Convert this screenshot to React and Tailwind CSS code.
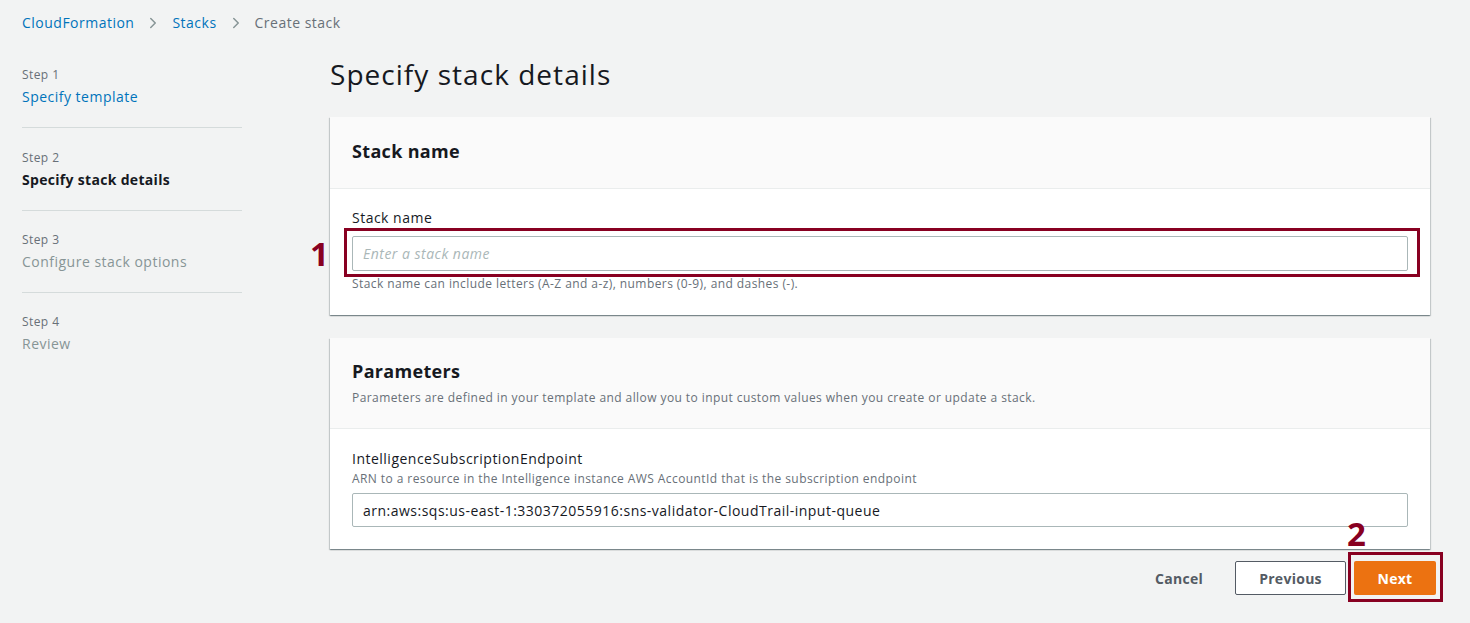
import { ChevronRight } from 'lucide-react';

const font = { fontFamily: '"Open Sans", "Noto Sans", Arial, sans-serif' };

const steps = [
  { step: 'Step 1', label: 'Specify template', state: 'done' },
  { step: 'Step 2', label: 'Specify stack details', state: 'current' },
  { step: 'Step 3', label: 'Configure stack options', state: 'todo' },
  { step: 'Step 4', label: 'Review', state: 'todo' },
];

function Breadcrumbs() {
  return (
    <div className="flex items-center h-[44px] pt-[1px] pl-[22px] text-[14px] leading-5 tracking-[0.035em]">
      <span className="text-[#0073bb]">CloudFormation</span>
      <ChevronRight className="mx-[10px] w-[18px] h-[18px] text-[#879596]" strokeWidth={2} />
      <span className="text-[#0073bb]">Stacks</span>
      <ChevronRight className="mx-[10px] w-[18px] h-[18px] text-[#879596]" strokeWidth={2} />
      <span className="text-[#687078]">Create stack</span>
    </div>
  );
}

function Sidebar() {
  return (
    <div className="w-[220px] shrink-0">
      {steps.map((s, i) => (
        <div
          key={s.step}
          className={`${i === 0 ? 'pt-[23px]' : i === 1 ? 'pt-[22px]' : 'pt-[21px]'} pb-[20px] ${
            i < steps.length - 1 ? 'border-b border-[#d5dbdb]' : ''
          }`}
        >
          <div className="text-[12px] leading-4 text-[#687078] tracking-[0.035em]">{s.step}</div>
          <div
            className={`mt-[4px] text-[14px] leading-5 ${
              s.state === 'done'
                ? 'text-[#0073bb] tracking-[0.035em]'
                : s.state === 'current'
                ? 'font-bold text-[#16191f] tracking-[0.022em]'
                : 'text-[#879596] tracking-[0.035em]'
            }`}
          >
            {s.label}
          </div>
        </div>
      ))}
    </div>
  );
}

function Marker({ n, className }) {
  return (
    <span className={`absolute text-[33px] leading-none font-bold text-[#880021] ${className}`}>{n}</span>
  );
}

function Panel({ children }) {
  return (
    <div className="bg-white shadow-[0_1px_1px_0_rgba(0,28,36,0.3),1px_1px_1px_0_rgba(0,28,36,0.15),-1px_1px_1px_0_rgba(0,28,36,0.15)]">
      {children}
    </div>
  );
}

export default function App() {
  return (
    <div className="min-h-[623px] bg-[#f2f3f3] text-[#16191f]" style={font}>
      <Breadcrumbs />
      <div className="flex pl-[22px]">
        <Sidebar />
        <div className="ml-[88px] w-[1100px]">
          <h1 className="mt-[12px] text-[28px] leading-9 font-normal text-[#16191f] tracking-[0.037em]">
            Specify stack details
          </h1>

          <div className="mt-[25px]">
            <Panel>
              <div className="bg-[#fafafa] border-b border-[#eaeded] px-[22px] pt-[22px] pb-[25px]">
                <h2 className="text-[18px] leading-6 font-bold tracking-[0.018em]">Stack name</h2>
              </div>
              <div className="px-[22px] pt-[19px] pb-[23px]">
                <div className="text-[14px] leading-5 tracking-[0.035em]">Stack name</div>
                <div className="relative mt-[8px]">
                  <div className="h-[35px] border border-[#aab7b8] rounded-[2px] flex items-center px-[10px] text-[14px] italic text-[#aab7b8] tracking-[0.035em]">
                    Enter a stack name
                  </div>
                  <div className="absolute left-[-8px] right-[-12px] top-[-8px] bottom-[-6px] border-[3px] border-[#880021]" />
                  <Marker n="1" className="left-[-42px] top-[1px]" />
                </div>
                <div className="mt-[5px] text-[12px] leading-4 text-[#687078] tracking-[0.035em]">
                  Stack name can include letters (A-Z and a-z), numbers (0-9), and dashes (-).
                </div>
              </div>
            </Panel>
          </div>

          <div className="mt-[23px]">
            <Panel>
              <div className="bg-[#fafafa] border-b border-[#eaeded] px-[22px] pt-[21px] pb-[22px]">
                <h2 className="text-[18px] leading-6 font-bold tracking-[0.018em]">Parameters</h2>
                <div className="mt-[7px] text-[12px] leading-4 text-[#687078] tracking-[0.035em]">
                  Parameters are defined in your template and allow you to input custom values when you create or update a stack.
                </div>
              </div>
              <div className="px-[22px] pt-[20px] pb-[22px]">
                <div className="text-[14px] leading-5 tracking-[0.035em]">IntelligenceSubscriptionEndpoint</div>
                <div className="mt-[2px] text-[12px] leading-4 text-[#687078] tracking-[0.035em]">
                  ARN to a resource in the Intelligence instance AWS AccountId that is the subscription endpoint
                </div>
                <div className="mt-[6px] h-[34px] border border-[#aab7b8] rounded-[2px] flex items-center px-[10px] text-[14px] text-[#16191f] tracking-[0.035em]">
                  arn:aws:sqs:us-east-1:330372055916:sns-validator-CloudTrail-input-queue
                </div>
              </div>
            </Panel>
          </div>

          <div className="mt-[12px] -mr-[6px] flex items-center justify-end">
            <button className="text-[14px] font-bold text-[#545b64] px-[20px] h-[34px] tracking-[0.02em]">Cancel</button>
            <button className="ml-[12px] w-[111px] h-[34px] border border-[#545b64] rounded-[2px] bg-white text-[14px] font-bold text-[#545b64] tracking-[0.02em]">
              Previous
            </button>
            <div className="relative ml-[8px]">
              <button className="w-[82px] h-[34px] rounded-[2px] bg-[#ec7211] text-[14px] font-bold text-white tracking-[0.02em]">
                Next
              </button>
              <div className="absolute left-[-6px] right-[-7px] top-[-9px] bottom-[-7px] border-[3px] border-[#880021]" />
              <Marker n="2" className="left-[-7px] top-[-44px]" />
            </div>
          </div>
        </div>
      </div>
    </div>
  );
}
